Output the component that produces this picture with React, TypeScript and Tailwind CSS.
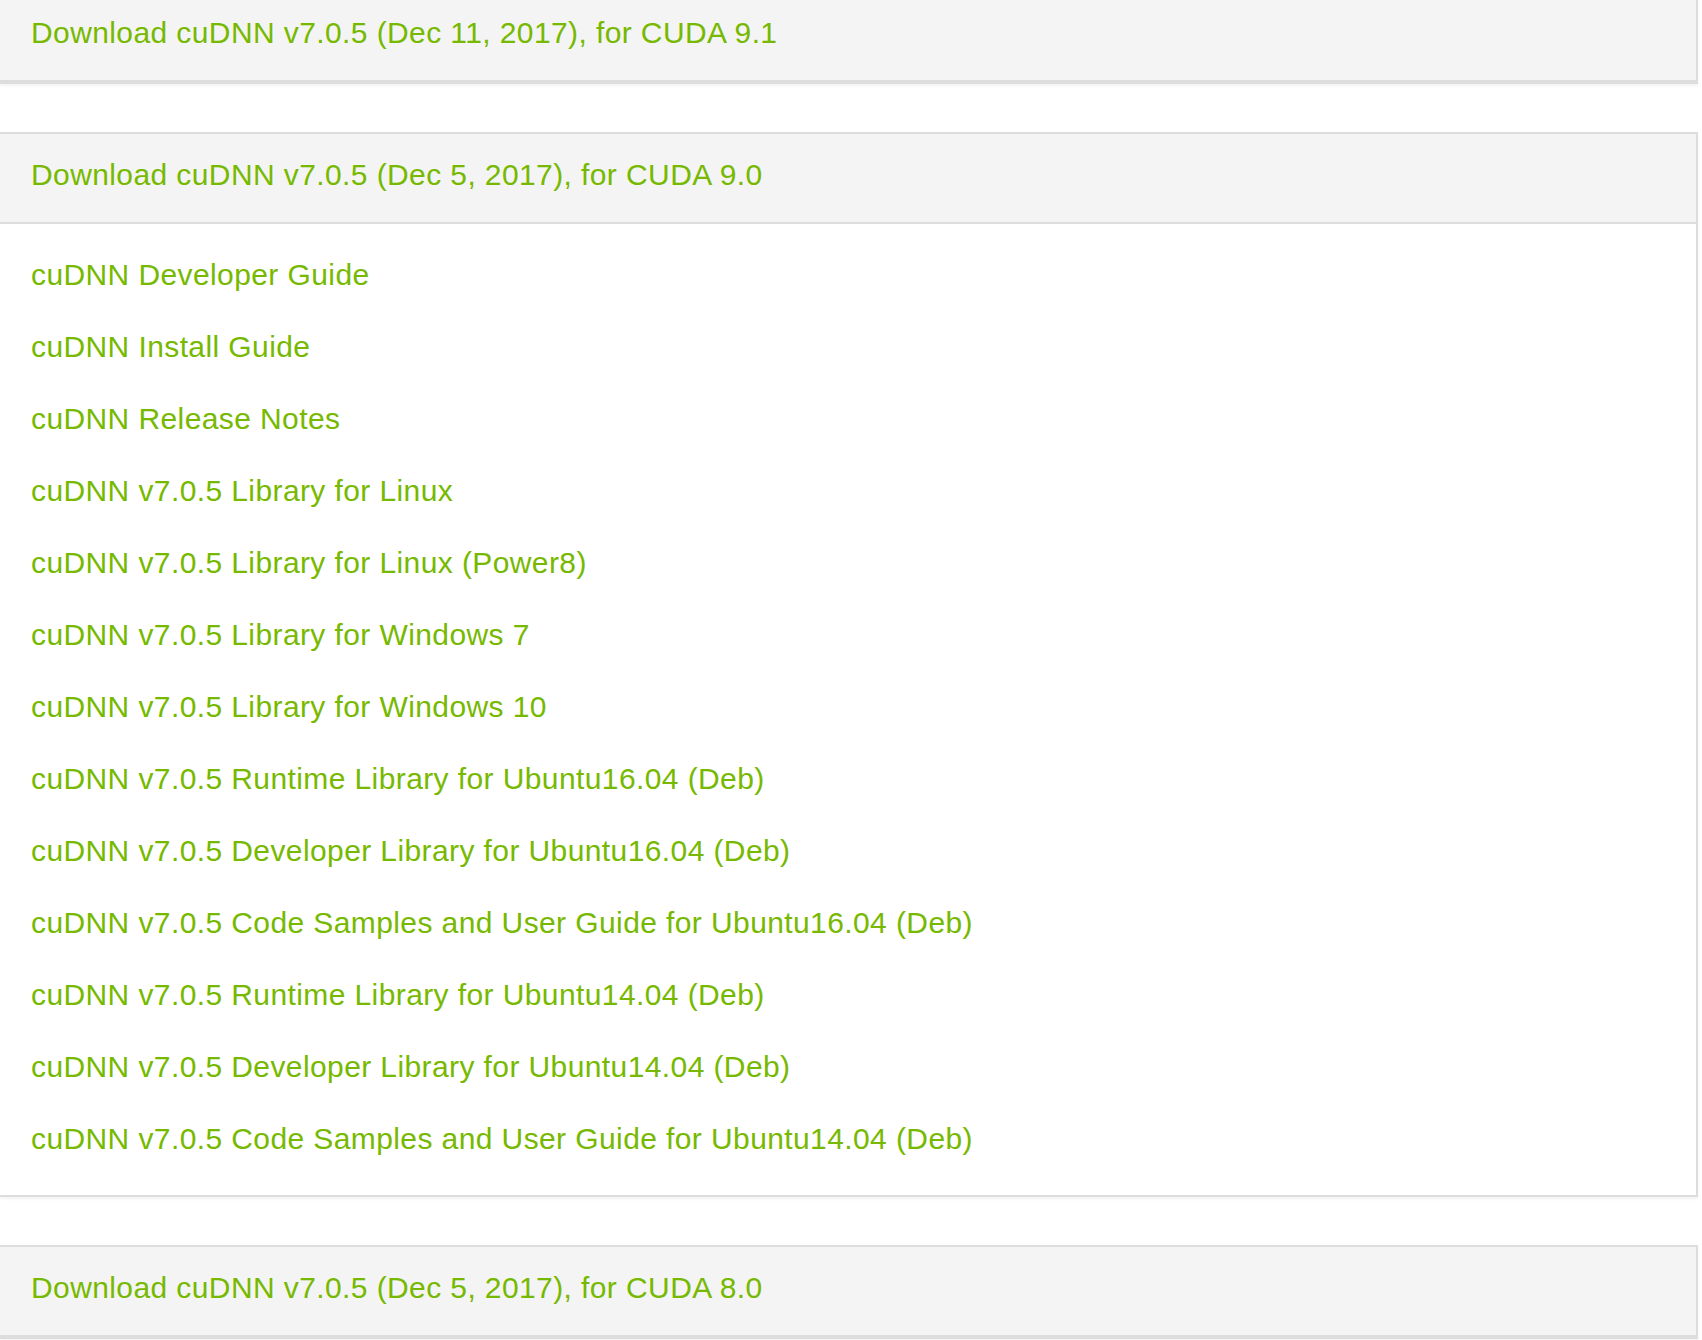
import React from 'react';

const LINKS = [
  'cuDNN Developer Guide',
  'cuDNN Install Guide',
  'cuDNN Release Notes',
  'cuDNN v7.0.5 Library for Linux',
  'cuDNN v7.0.5 Library for Linux (Power8)',
  'cuDNN v7.0.5 Library for Windows 7',
  'cuDNN v7.0.5 Library for Windows 10',
  'cuDNN v7.0.5 Runtime Library for Ubuntu16.04 (Deb)',
  'cuDNN v7.0.5 Developer Library for Ubuntu16.04 (Deb)',
  'cuDNN v7.0.5 Code Samples and User Guide for Ubuntu16.04 (Deb)',
  'cuDNN v7.0.5 Runtime Library for Ubuntu14.04 (Deb)',
  'cuDNN v7.0.5 Developer Library for Ubuntu14.04 (Deb)',
  'cuDNN v7.0.5 Code Samples and User Guide for Ubuntu14.04 (Deb)',
];

const Panel: React.FC<{ title: string; open?: boolean }> = ({ title, open }) => (
  <div className="w-[1698px] bg-white border-2 border-l-0 border-[#dddddd] shadow-[0_2px_3px_rgba(0,0,0,0.05)]">
    <div className="bg-[#f4f4f4] border-b-2 border-[#dddddd] h-[90px] pt-[21px] pl-[31px]">
      <a href="#" className="text-[#76b900] text-[30px] leading-[40px] tracking-[0.4px] block">
        {title}
      </a>
    </div>
    {open && (
      <div className="pt-[15px] pb-[20px] pl-[31px]">
        {LINKS.map(link => (
          <a key={link} href="#" className="block text-[#76b900] text-[30px] leading-[72px] tracking-[0.4px]">
            {link}
          </a>
        ))}
      </div>
    )}
  </div>
);

const App: React.FC = () => {
  return (
    <div className="min-h-[1340px] bg-white overflow-hidden font-['Liberation_Sans',Arial,sans-serif]">
      <div className="-mt-[10px] flex flex-col gap-[48px]">
        <Panel title="Download cuDNN v7.0.5 (Dec 11, 2017), for CUDA 9.1" />
        <Panel title="Download cuDNN v7.0.5 (Dec 5, 2017), for CUDA 9.0" open />
        <Panel title="Download cuDNN v7.0.5 (Dec 5, 2017), for CUDA 8.0" />
      </div>
    </div>
  );
};

export default App;
